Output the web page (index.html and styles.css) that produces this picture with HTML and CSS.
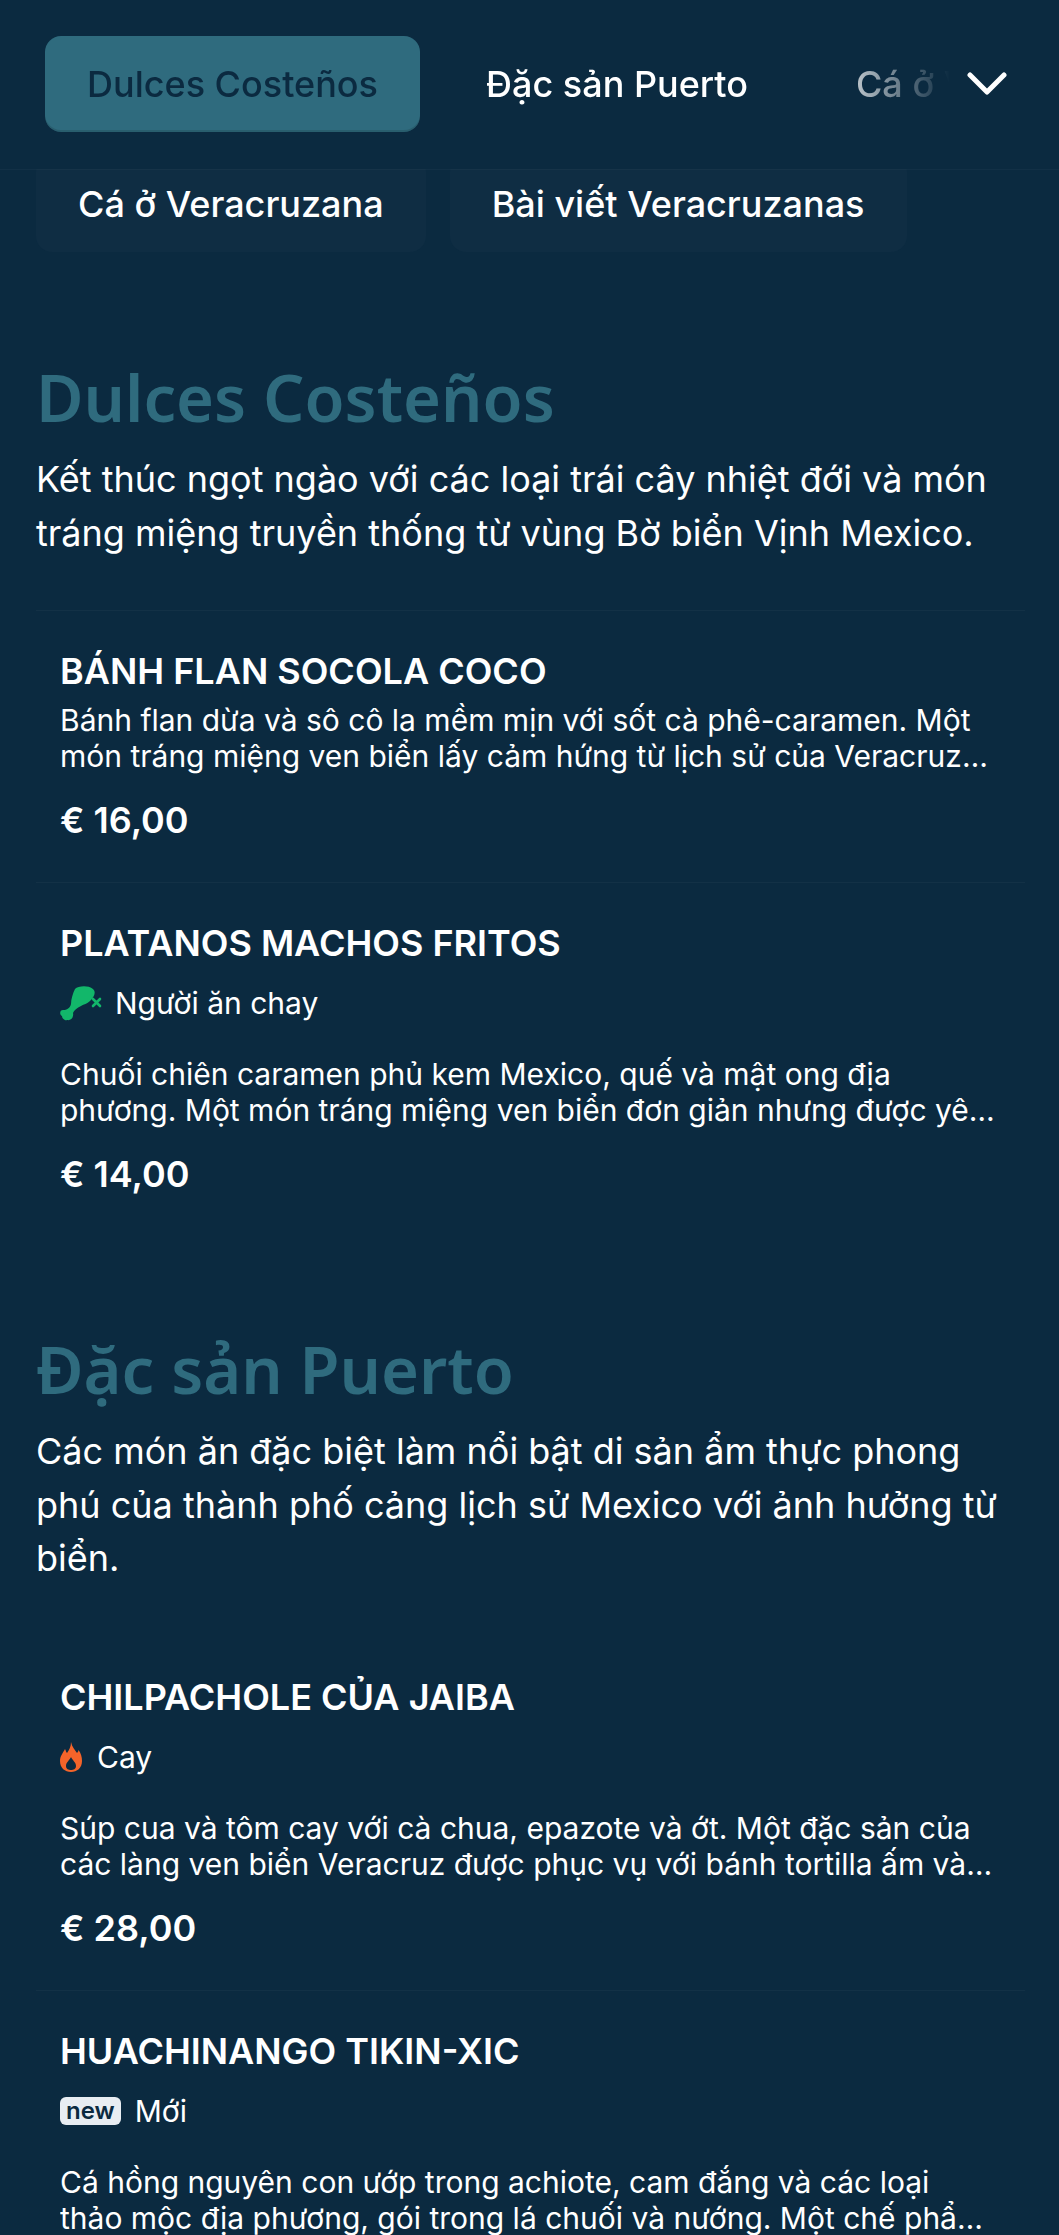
FILE: index.html
```html
<!DOCTYPE html>
<html lang="vi">
<head>
<meta charset="utf-8">
<title>Menu</title>
<link rel="stylesheet" href="styles.css">
</head>
<body>
<header class="topbar">
  <nav class="tabs">
    <a class="tab tab-active">Dulces Costeños</a>
    <a class="tab">Đặc sản Puerto</a>
    <a class="tab">Cá ở Veracruzana</a>
    <a class="tab">Bài viết Veracruzanas</a>
  </nav>
  <svg class="chevron" viewBox="0 0 40 24" width="40" height="24" aria-hidden="true"><path d="M3 3 L20 20 L37 3" fill="none" stroke="#fff" stroke-width="5" stroke-linecap="round" stroke-linejoin="round"/></svg>
</header>
<div class="pills">
  <a class="pill">Cá ở Veracruzana</a>
  <a class="pill">Bài viết Veracruzanas</a>
</div>
<main>
  <section class="section">
    <h2 class="section-title">Dulces Costeños</h2>
    <p class="section-desc">Kết thúc ngọt ngào với các loại trái cây nhiệt đới và món tráng miệng truyền thống từ vùng Bờ biển Vịnh Mexico.</p>
    <article class="item item-first">
      <h3 class="item-title">BÁNH FLAN SOCOLA COCO</h3>
      <p class="item-desc item-desc-tight">Bánh flan dừa và sô cô la mềm mịn với sốt cà phê-caramen. Một món tráng miệng ven biển lấy cảm hứng từ lịch sử của Veracruz và những ngày nắng ấm bên bờ biển.</p>
      <div class="item-price">€ 16,00</div>
    </article>
    <article class="item">
      <h3 class="item-title">PLATANOS MACHOS FRITOS</h3>
      <div class="tag tag-veg">
        <svg class="tag-icon-veg" viewBox="0 0 42 35" width="42" height="35" aria-hidden="true">
          <path d="M15 3 C18 0 28 -1 33 3 C37 7 33 12 30 15 C27 18 24 18 21 20 C17 22 14 24 13 27 C14 31 11 35 7 34 C6 35 2 33 2 30 C-1 28 0 24 3 24 C7 24 10 22 11 18 C11 13 13 7 15 3 Z" fill="#12b76a"/>
          <path d="M33 13 L40 20 M40 13 L33 20" stroke="#12b76a" stroke-width="2.6" stroke-linecap="round"/>
        </svg>
        <span>Người ăn chay</span>
      </div>
      <p class="item-desc">Chuối chiên caramen phủ kem Mexico, quế và mật ong địa phương. Một món tráng miệng ven biển đơn giản nhưng được yêu thích khắp vùng Veracruz từ nhiều thế hệ nay.</p>
      <div class="item-price">€ 14,00</div>
    </article>
  </section>
  <section class="section section-next">
    <h2 class="section-title">Đặc sản Puerto</h2>
    <p class="section-desc">Các món ăn đặc biệt làm nổi bật di sản ẩm thực phong phú của thành phố cảng lịch sử Mexico với ảnh hưởng từ biển.</p>
    <article class="item item-plain">
      <h3 class="item-title">CHILPACHOLE CỦA JAIBA</h3>
      <div class="tag tag-hot">
        <svg class="tag-icon-hot" viewBox="0 0 22 30" width="22" height="30" aria-hidden="true">
          <path fill-rule="evenodd" d="M11 0 C12 5 15 8 17 11 C18 10 18.5 9 18.5 8 C21 11 22 15 22 19 C22 26 17 30 11 30 C5 30 0 26 0 19 C0 14 3 11 5 7 C6 9 6 10 7 11 C9 8 11 5 11 0 Z M11 15 C10 18 6 20 6 24 C6 27 8.5 28 11 28 C13.5 28 16 27 16 24 C16 20 12 18 11 15 Z" fill="#f4642a"/>
        </svg>
        <span>Cay</span>
      </div>
      <p class="item-desc">Súp cua và tôm cay với cà chua, epazote và ớt. Một đặc sản của các làng ven biển Veracruz được phục vụ với bánh tortilla ấm và chanh tươi vắt tại bàn của bạn.</p>
      <div class="item-price">€ 28,00</div>
    </article>
    <article class="item">
      <h3 class="item-title">HUACHINANGO TIKIN-XIC</h3>
      <div class="tag">
        <span class="badge-new">new</span>
        <span>Mới</span>
      </div>
      <p class="item-desc">Cá hồng nguyên con ướp trong achiote, cam đắng và các loại thảo mộc địa phương, gói trong lá chuối và nướng. Một chế phẩm truyền thống của vùng bờ biển Mexico.</p>
    </article>
  </section>
</main>
</body>
</html>
```
FILE: styles.css
```css
* { box-sizing: border-box; }
html, body { height: 100%; overflow: hidden; }
body {
  margin: 0;
  background: #0b2a40;
  color: #fff;
  font-family: Inter, "Noto Sans", sans-serif;
}
h2, h3, p { margin: 0; }

.topbar {
  position: relative;
  z-index: 2;
  height: 169px;
  display: flex;
  align-items: flex-start;
  padding: 36px 0 0 45px;
  background: #0b2a40;
  box-shadow: 0 1px 0 rgba(255, 255, 255, 0.03);
}
.tabs {
  width: 905px;
  display: flex;
  gap: 24px;
  overflow: hidden;
  -webkit-mask-image: linear-gradient(to right, #000 85.6%, transparent 100%);
  mask-image: linear-gradient(to right, #000 85.6%, transparent 100%);
}
.tab {
  flex: none;
  height: 96px;
  padding: 0 42px;
  border-radius: 16px;
  display: flex;
  align-items: center;
  font-size: 36px;
  font-weight: 500;
  line-height: 44px;
}
.tab-active {
  background: #2f6b7e;
  color: #0b2a40;
  box-shadow: inset 0 -2px 0 rgba(0, 0, 0, 0.12);
}
.chevron { flex: none; margin: 36px 0 0 17px; }

.pills {
  height: 83px;
  display: flex;
  align-items: flex-end;
  gap: 24px;
  padding-left: 36px;
}
.pill {
  flex: none;
  height: 96px;
  padding: 0 42px;
  display: flex;
  align-items: center;
  background: #0f2d43;
  border-radius: 16px;
  font-size: 36px;
  font-weight: 500;
}

.section { padding: 108px 34px 0 36px; }
.section-next { padding-top: 96px; }
.section-title {
  font-family: "Noto Sans", sans-serif;
  font-size: 65px;
  font-weight: 600;
  line-height: 74px;
  color: #2f6b7e;
}
.section-desc {
  margin-top: 19px;
  font-size: 36px;
  line-height: 53.5px;
}
.item { padding: 38px 28px 40px 24px; border-top: 1px solid rgba(255, 255, 255, 0.035); }
.item-first { margin-top: 50px; }
.item-plain { margin-top: 50px; border-top-color: transparent; }
.item-title {
  font-size: 36px;
  font-weight: 600;
  line-height: 44px;
}
.item-desc {
  margin-top: 33px;
  font-size: 30px;
  line-height: 36px;
  display: -webkit-box;
  -webkit-box-orient: vertical;
  -webkit-line-clamp: 2;
  overflow: hidden;
}
.item-desc-tight { margin-top: 9px; }
.item-price {
  margin-top: 24px;
  font-size: 36px;
  font-weight: 600;
  line-height: 44px;
}
.tag {
  margin-top: 18px;
  height: 40px;
  display: flex;
  align-items: center;
  gap: 14px;
  font-size: 30px;
  line-height: 40px;
}
.tag-hot { gap: 15px; }
.tag-veg { gap: 13px; }
.tag-icon-veg { flex: none; }
.tag-icon-hot { flex: none; }
.badge-new {
  height: 28px;
  padding: 0 6px;
  display: flex;
  align-items: center;
  background: #e8edf2;
  border-radius: 6px;
  color: #0b2a40;
  font-size: 24px;
  font-weight: 600;
  line-height: 28px;
}
```
